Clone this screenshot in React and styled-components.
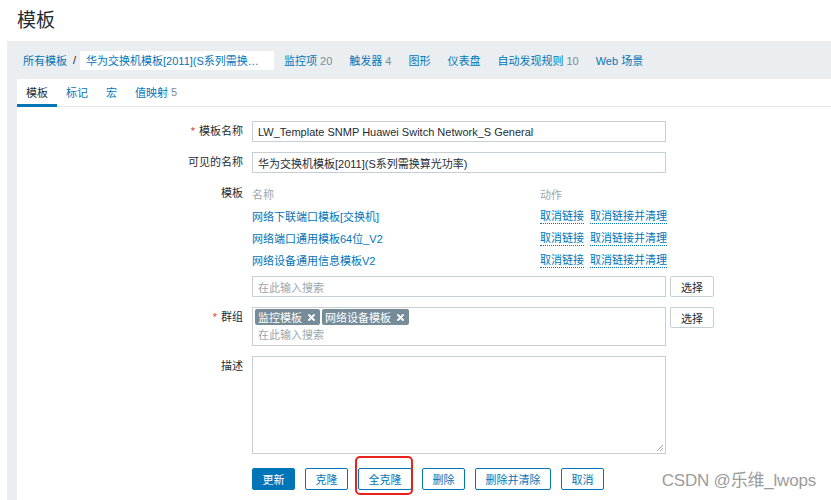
import styled, { createGlobalStyle } from "styled-components"

const Global = createGlobalStyle`
    html, body {
        margin: 0;
        padding: 0;
        background: #fff;
        overflow: hidden;
    }
    body {
        font-family: "Liberation Sans", "Noto Sans CJK SC", sans-serif;
        font-size: 11px;
        color: #1f2c33;
    }
`

const BLUE = "#0275b8"
const GRAY = "#768d99"

const Page = styled.div`
    position: relative;
    height: 500px;
    display: flex;
    flex-direction: column;
`
const Title = styled.h1`
    margin: 0;
    height: 41px;
    line-height: 42px;
    padding-left: 17px;
    font-size: 19px;
    font-weight: normal;
    color: #1f2c33;
`
const Shell = styled.main`
    flex: 1;
    margin-left: 7px;
    background: #ebeef0;
    display: flex;
    flex-direction: column;
`
const Crumbs = styled.nav`
    height: 38px;
    display: flex;
    align-items: center;
    padding-left: 16px;
`
const CrumbLink = styled.a`
    color: ${BLUE};
    text-decoration: none;
    white-space: nowrap;
`
const Sep = styled.span`
    margin: 0 4px 0 6px;
    color: #1f2c33;
`
const CrumbBox = styled.span`
    display: flex;
    align-items: center;
    width: 194px;
    height: 19px;
    box-sizing: border-box;
    padding-left: 6px;
    background: #fff;
    color: ${BLUE};
    white-space: nowrap;
    overflow: hidden;
`
const NavList = styled.div`
    display: flex;
    gap: 17px;
    margin-left: 10px;
`
const Count = styled.span`
    color: ${GRAY};
    margin-left: 3px;
`
const Panel = styled.section`
    flex: 1;
    margin-left: 10px;
    background: #fff;
    display: flex;
    flex-direction: column;
`
const TabBar = styled.div`
    display: flex;
    border-bottom: 1px solid #e4e8ea;
    height: 27px;
`
const Tab = styled.div`
    height: 28px;
    box-sizing: border-box;
    padding: 0 9px;
    display: flex;
    align-items: center;
    margin-bottom: -1px;
    color: ${p => (p.$active ? "#1f2c33" : BLUE)};
    border-bottom: 3px solid ${p => (p.$active ? BLUE : "transparent")};
`
const Form = styled.div`
    display: grid;
    grid-template-columns: 226px 1fr;
    column-gap: 9px;
    row-gap: 10px;
    padding-top: 14px;
`
const Label = styled.div`
    text-align: right;
    line-height: 21px;
    white-space: nowrap;
`
const Star = styled.span`
    color: #e33734;
    margin-right: 4px;
`
const Field = styled.div`
    display: flex;
    flex-direction: column;
`
const Input = styled.div`
    width: 414px;
    height: 21px;
    box-sizing: border-box;
    border: 1px solid #c5cfd4;
    padding-left: 5px;
    display: flex;
    align-items: center;
    color: ${p => (p.$placeholder ? "#9aa7ae" : "#1f2c33")};
    white-space: nowrap;
`
const Table = styled.div`
    display: grid;
    grid-template-columns: 288px max-content;
    grid-auto-rows: 22px;
    align-items: center;
    white-space: nowrap;
`
const Head = styled.div`
    color: #9aa7ae;
`
const Link = styled.a`
    color: ${BLUE};
    text-decoration: none;
`
const Actions = styled.div`
    display: flex;
    gap: 6px;
`
const ActionLink = styled.a`
    color: ${BLUE};
    text-decoration: none;
    border-bottom: 1px dotted ${BLUE};
    line-height: 14px;
`
const WithButton = styled.div`
    display: flex;
    align-items: flex-start;
    gap: 4px;
    margin-top: ${p => p.$top || 0}px;
`
const SelectBtn = styled.button`
    width: 44px;
    height: 21px;
    background: #fff;
    border: 1px solid #c5cfd4;
    border-radius: 2px;
    font: inherit;
    color: #1f2c33;
    padding: 0;
`
const Multi = styled.div`
    width: 414px;
    height: 39px;
    box-sizing: border-box;
    border: 1px solid #c5cfd4;
    padding: 1px 2px 0;
    display: flex;
    flex-direction: column;
    gap: 2px;
`
const Tags = styled.div`
    display: flex;
    gap: 2px;
`
const Tag = styled.span`
    height: 16px;
    padding: 0 5px 0 3px;
    display: flex;
    align-items: center;
    gap: 6px;
    background: ${GRAY};
    color: #fff;
    border-radius: 2px;
`
const Placeholder = styled.span`
    color: #9aa7ae;
    padding-left: 3px;
    line-height: 16px;
`
const TextArea = styled.div`
    position: relative;
    width: 414px;
    height: 98px;
    box-sizing: border-box;
    border: 1px solid #c5cfd4;
`
const Grip = styled.svg`
    position: absolute;
    right: 1px;
    bottom: 1px;
`
const Buttons = styled.div`
    display: flex;
    gap: 10px;
    margin-top: 4px;
`
const Btn = styled.button`
    position: relative;
    height: 22px;
    padding: 0 9.5px;
    border: 1px solid ${BLUE};
    border-radius: 2px;
    background: ${p => (p.$primary ? BLUE : "#fff")};
    color: ${p => (p.$primary ? "#fff" : BLUE)};
    font: inherit;
`
const Highlight = styled.span`
    position: absolute;
    left: -4px;
    right: -2px;
    top: -13px;
    bottom: -6px;
    border: 2px solid #e8211c;
    border-radius: 5px;
    pointer-events: none;
`
const Watermark = styled.div`
    position: absolute;
    right: 15px;
    bottom: 9px;
    font-size: 17px;
    color: #9c9c9c;
    letter-spacing: -0.2px;
`

const X = () => (
    <svg width="7" height="7" viewBox="0 0 7 7">
        <path d="M1 1 L6 6 M6 1 L1 6" stroke="#fff" strokeWidth="1.8" strokeLinecap="round" />
    </svg>
)

const linked = ["网络下联端口模板[交换机]", "网络端口通用模板64位_V2", "网络设备通用信息模板V2"]

const App = () => {
    return (
        <Page>
            <Global />
            <Title>模板</Title>
            <Shell>
                <Crumbs>
                    <CrumbLink>所有模板</CrumbLink>
                    <Sep>/</Sep>
                    <CrumbBox>华为交换机模板[2011](S系列需换…</CrumbBox>
                    <NavList>
                        <CrumbLink>监控项<Count>20</Count></CrumbLink>
                        <CrumbLink>触发器<Count>4</Count></CrumbLink>
                        <CrumbLink>图形</CrumbLink>
                        <CrumbLink>仪表盘</CrumbLink>
                        <CrumbLink>自动发现规则<Count>10</Count></CrumbLink>
                        <CrumbLink>Web 场景</CrumbLink>
                    </NavList>
                </Crumbs>
                <Panel>
                    <TabBar>
                        <Tab $active>模板</Tab>
                        <Tab>标记</Tab>
                        <Tab>宏</Tab>
                        <Tab>值映射<Count>5</Count></Tab>
                    </TabBar>
                    <Form>
                        <Label><Star>*</Star>模板名称</Label>
                        <Input>LW_Template SNMP Huawei Switch Network_S General</Input>

                        <Label>可见的名称</Label>
                        <Input>华为交换机模板[2011](S系列需换算光功率)</Input>

                        <Label>模板</Label>
                        <Field>
                            <Table>
                                <Head>名称</Head>
                                <Head>动作</Head>
                                {linked.map(name => [
                                    <Link key={name}>{name}</Link>,
                                    <Actions key={name + "-a"}>
                                        <ActionLink>取消链接</ActionLink>
                                        <ActionLink>取消链接并清理</ActionLink>
                                    </Actions>
                                ])}
                            </Table>
                            <WithButton $top={5}>
                                <Input $placeholder>在此输入搜索</Input>
                                <SelectBtn>选择</SelectBtn>
                            </WithButton>
                        </Field>

                        <Label><Star>*</Star>群组</Label>
                        <WithButton>
                            <Multi>
                                <Tags>
                                    <Tag>监控模板<X /></Tag>
                                    <Tag>网络设备模板<X /></Tag>
                                </Tags>
                                <Placeholder>在此输入搜索</Placeholder>
                            </Multi>
                            <SelectBtn>选择</SelectBtn>
                        </WithButton>

                        <Label>描述</Label>
                        <TextArea>
                            <Grip width="8" height="8" viewBox="0 0 8 8">
                                <path d="M7 1 L1 7 M7 4 L4 7" stroke="#9aa7ae" strokeWidth="1" />
                            </Grip>
                        </TextArea>

                        <div />
                        <Buttons>
                            <Btn $primary>更新</Btn>
                            <Btn>克隆</Btn>
                            <Btn>全克隆<Highlight /></Btn>
                            <Btn>删除</Btn>
                            <Btn>删除并清除</Btn>
                            <Btn>取消</Btn>
                        </Buttons>
                    </Form>
                </Panel>
            </Shell>
            <Watermark>CSDN @乐维_lwops</Watermark>
        </Page>
    )
}

export default App
